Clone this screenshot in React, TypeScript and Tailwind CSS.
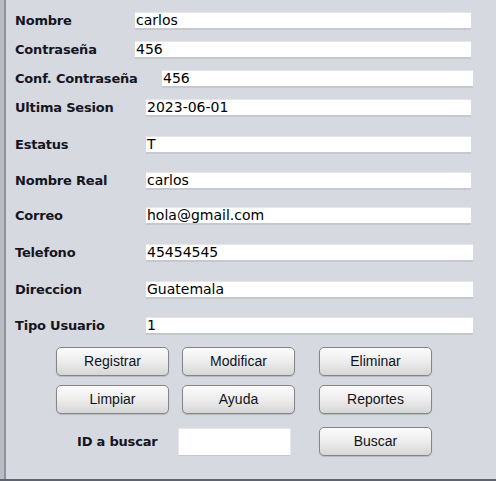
const FIELDS = [
  { label: 'Nombre', value: 'carlos', wrap: 'mt-[12px]', input: 'ml-[129px] w-[336px]' },
  { label: 'Contraseña', value: '456', wrap: 'mt-[11px]', input: 'ml-[129px] w-[336px]' },
  { label: 'Conf. Contraseña', value: '456', wrap: 'mt-[11px]', input: 'ml-[156px] w-[311px]' },
  { label: 'Ultima Sesion', value: '2023-06-01', wrap: 'mt-[11px]', input: 'ml-[140px] w-[325px]' },
  { label: 'Estatus', value: 'T', wrap: 'mt-[19px]', input: 'ml-[140px] w-[325px]' },
  { label: 'Nombre Real', value: 'carlos', wrap: 'mt-[18px]', input: 'ml-[140px] w-[325px]' },
  { label: 'Correo', value: 'hola@gmail.com', wrap: 'mt-[17px]', input: 'ml-[140px] w-[325px]' },
  { label: 'Telefono', value: '45454545', wrap: 'mt-[19px]', input: 'ml-[140px] w-[327px]' },
  { label: 'Direccion', value: 'Guatemala', wrap: 'mt-[19px]', input: 'ml-[140px] w-[327px]' },
  { label: 'Tipo Usuario', value: '1', wrap: 'mt-[18px]', input: 'ml-[140px] w-[327px]' },
]

function Btn({ text }: { text: string }) {
  return (
    <button className="w-[113px] h-[29px] rounded-[5px] border border-[#858585] bg-gradient-to-b from-[#fcfcfc] via-[#ededed] to-[#d6d6d6] shadow-[0_1px_1px_rgba(0,0,0,0.15)] text-[14px] text-[#10131c] font-['Liberation_Sans',Arial,sans-serif]">
      {text}
    </button>
  )
}

export default function App() {
  return (
    <div className="w-[496px] h-[481px] flex flex-col bg-[#d6d9e0] overflow-hidden">
      <div className="flex flex-1">
        <div className="w-[4px] bg-[#b9bcc5]" />
        <div className="w-[2px] bg-[#8e929b]" />
        <div className="flex-1 flex flex-col">
          {FIELDS.map(f => (
            <div key={f.label} className={`relative flex items-center h-[18px] ${f.wrap}`}>
              <span className="absolute left-[9px] whitespace-nowrap text-[13px] font-bold text-[#15151f] tracking-[-0.2px] font-['DejaVu_Sans',sans-serif]">
                {f.label}
              </span>
              <div className={`h-[18px] flex items-center bg-white border-t border-t-[#e4e6ea] border-b-2 border-b-[#c6c8ce] pl-[1px] text-[14px] text-black font-['DejaVu_Sans',sans-serif] ${f.input}`}>
                {f.value}
              </div>
            </div>
          ))}

          <div className="flex mt-[12px] pl-[50px]">
            <Btn text="Registrar" />
            <div className="ml-[13px]"><Btn text="Modificar" /></div>
            <div className="ml-[24px]"><Btn text="Eliminar" /></div>
          </div>
          <div className="flex mt-[9px] pl-[50px]">
            <Btn text="Limpiar" />
            <div className="ml-[13px]"><Btn text="Ayuda" /></div>
            <div className="ml-[24px]"><Btn text="Reportes" /></div>
          </div>
          <div className="flex items-center mt-[13px]">
            <span className="ml-[71px] w-[101px] text-[13px] font-bold text-[#15151f] tracking-[-0.2px] font-['DejaVu_Sans',sans-serif]">
              ID a buscar
            </span>
            <div className="w-[113px] h-[28px] bg-white border border-[#e4e6ea] border-b-[#c6c8ce]" />
            <div className="ml-[28px]"><Btn text="Buscar" /></div>
          </div>
        </div>
      </div>
      <div className="h-[2px] bg-[#5f6370]" />
    </div>
  )
}
